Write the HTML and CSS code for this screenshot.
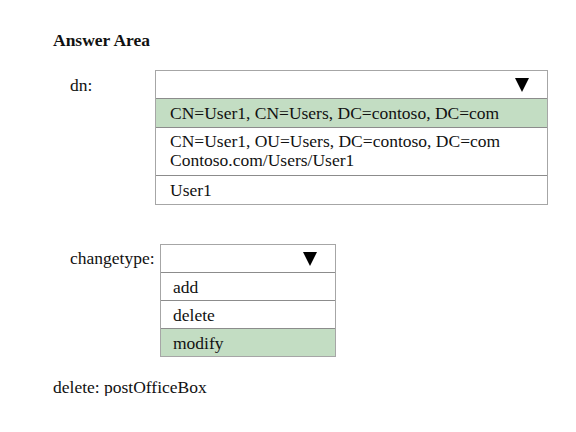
FILE: index.html
```html
<!DOCTYPE html>
<html>
<head>
<meta charset="utf-8">
<link rel="stylesheet" href="styles.css">
</head>
<body>
<div class="area">
  <h1 class="title">Answer Area</h1>
  <div class="field dn">
    <div class="label">dn:</div>
    <div class="box">
      <div class="head"><span class="arrow"></span></div>
      <div class="opt sel">CN=User1, CN=Users, DC=contoso, DC=com</div>
      <div class="opt two">CN=User1, OU=Users, DC=contoso, DC=com<br>Contoso.com/Users/User1</div>
      <div class="opt">User1</div>
    </div>
  </div>
  <div class="field ct">
    <div class="label">changetype:</div>
    <div class="box">
      <div class="head"><span class="arrow"></span></div>
      <div class="opt">add</div>
      <div class="opt">delete</div>
      <div class="opt sel">modify</div>
    </div>
  </div>
  <div class="last">delete: postOfficeBox</div>
</div>
</body>
</html>
```
FILE: styles.css
```css
html, body { margin: 0; padding: 0; background: #fff; }
body {
  font-family: "Liberation Serif", "DejaVu Serif", serif;
  font-size: 17.5px;
  color: #111;
}
.area { padding: 31px 0 0 53px; }
.title {
  margin: 0;
  font-size: 17.5px;
  font-weight: bold;
  line-height: 18px;
}
.field { display: flex; align-items: flex-start; }
.dn { margin-top: 21px; padding-left: 17px; }
.dn .label { width: 85px; padding-top: 6px; line-height: 18px; }
.dn .box { width: 391px; }
.ct { margin-top: 39px; padding-left: 17px; }
.ct .label { width: 90px; padding-top: 5px; line-height: 18px; }
.ct .box { width: 174px; }
.box { border: 1px solid #a6a6a6; }
.head {
  height: 27px;
  display: flex;
  justify-content: flex-end;
  align-items: center;
}
.dn .head { padding-right: 18px; }
.ct .head { padding-right: 18px; }
.arrow {
  width: 0; height: 0;
  border-left: 7px solid transparent;
  border-right: 7px solid transparent;
  border-top: 14px solid #000;
}
.opt {
  border-top: 1px solid #8c8c8c;
  line-height: 18px;
  padding: 5px 14px 5px 14px;
}
.ct .opt { padding: 5px 12px 4px 12px; }
.opt.two { line-height: 19px; padding-top: 4px; padding-bottom: 5px; }
.sel { background: #c3ddc3; }
.last { margin-top: 21px; line-height: 18px; }
```
